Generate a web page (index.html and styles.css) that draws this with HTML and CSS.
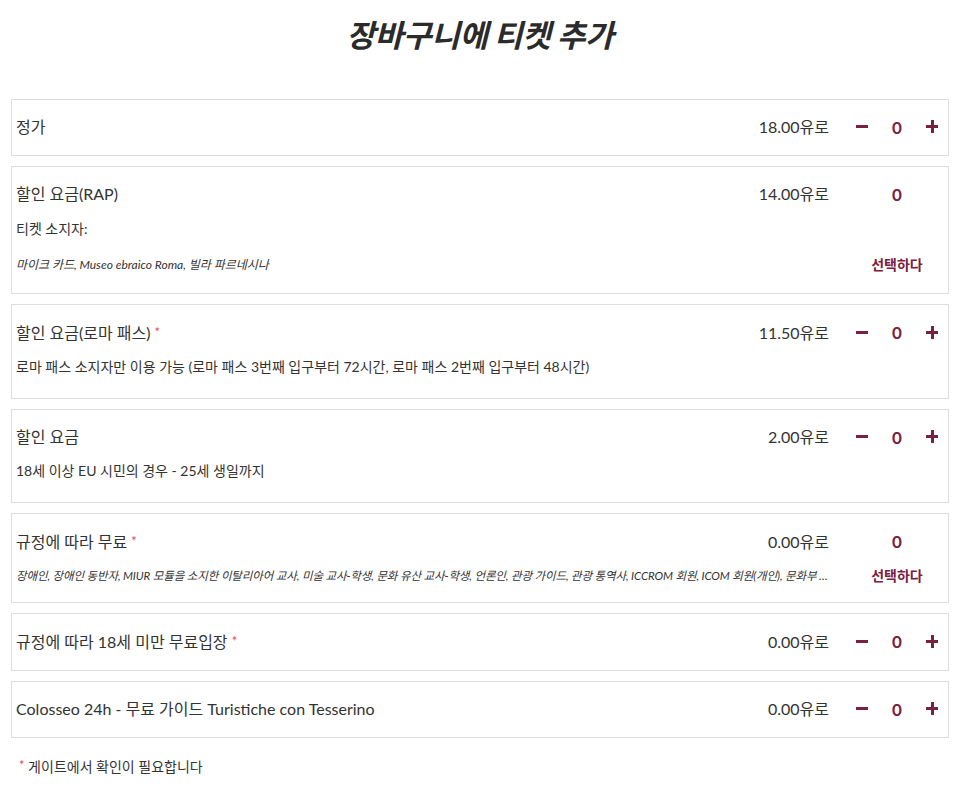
FILE: index.html
```html
<!DOCTYPE html>
<html lang="ko">
<head>
<meta charset="utf-8">
<title>장바구니에 티켓 추가</title>
<link rel="stylesheet" href="styles.css">
</head>
<body>
<div class="page">
  <h1 class="page-title">장바구니에 티켓 추가</h1>
  <div class="tickets">
    <div class="ticket">
      <div class="t-name">정가</div>
      <div class="t-price">18.00유로</div>
      <div class="counter"><span class="btn minus"></span><span class="qty">0</span><span class="btn plus"></span></div>
    </div>

    <div class="ticket">
      <div class="t-name">할인 요금(RAP)</div>
      <div class="t-price">14.00유로</div>
      <div class="counter single"><span class="qty">0</span></div>
      <div class="t-sub">티켓 소지자:</div>
      <div class="t-list">마이크 카드, Museo ebraico Roma, 빌라 파르네시나</div>
      <div class="select">선택하다</div>
    </div>

    <div class="ticket">
      <div class="t-name">할인 요금(로마 패스) <span class="req">*</span></div>
      <div class="t-price">11.50유로</div>
      <div class="counter"><span class="btn minus"></span><span class="qty">0</span><span class="btn plus"></span></div>
      <div class="t-sub last">로마 패스 소지자만 이용 가능 (로마 패스 3번째 입구부터 72시간, 로마 패스 2번째 입구부터 48시간)</div>
    </div>

    <div class="ticket">
      <div class="t-name">할인 요금</div>
      <div class="t-price">2.00유로</div>
      <div class="counter"><span class="btn minus"></span><span class="qty">0</span><span class="btn plus"></span></div>
      <div class="t-sub last">18세 이상 EU 시민의 경우 - 25세 생일까지</div>
    </div>

    <div class="ticket">
      <div class="t-name">규정에 따라 무료 <span class="req">*</span></div>
      <div class="t-price">0.00유로</div>
      <div class="counter single"><span class="qty">0</span></div>
      <div class="t-list clip">장애인, 장애인 동반자, MIUR 모듈을 소지한 이탈리아어 교사, 미술 교사-학생, 문화 유산 교사-학생, 언론인, 관광 가이드, 관광 통역사, ICCROM 회원, ICOM 회원(개인), 문화부 직원, 유럽 연합 회원국의 박물관 직원</div>
      <div class="select">선택하다</div>
    </div>

    <div class="ticket">
      <div class="t-name">규정에 따라 18세 미만 무료입장 <span class="req">*</span></div>
      <div class="t-price">0.00유로</div>
      <div class="counter"><span class="btn minus"></span><span class="qty">0</span><span class="btn plus"></span></div>
    </div>

    <div class="ticket">
      <div class="t-name">Colosseo 24h - 무료 가이드 Turistiche con Tesserino</div>
      <div class="t-price">0.00유로</div>
      <div class="counter"><span class="btn minus"></span><span class="qty">0</span><span class="btn plus"></span></div>
    </div>
  </div>
  <p class="note"><span class="req">*</span> 게이트에서 확인이 필요합니다</p>
</div>
</body>
</html>
```

FILE: styles.css
```css
* { box-sizing: border-box; }
html, body { margin: 0; padding: 0; background: #fff; }
body {
  font-family: Lato, "Noto Sans CJK KR", sans-serif;
  color: #333;
}
.page {
  padding: 0 17px 0 11px;
}
.page-title {
  margin: 15px 0 44px;
  text-align: center;
  font-size: 31px;
  line-height: 40px;
  font-weight: 700;
  font-style: italic;
  color: #2b2b2b;
  letter-spacing: -0.3px;
}
.tickets {
  display: flex;
  flex-direction: column;
  gap: 10px;
}
.ticket {
  border: 1px solid #dedede;
  padding: 15px 3px 16px 4px;
  display: grid;
  grid-template-columns: 1fr auto 96px;
  column-gap: 20px;
  align-items: center;
}
.t-name {
  font-size: 16px;
  line-height: 24px;
}
.t-price {
  font-size: 16px;
  line-height: 24px;
  text-align: right;
}
.counter {
  display: flex;
  justify-content: space-between;
  align-items: center;
  height: 24px;
}
.counter.single { justify-content: center; }
.qty {
  width: 26px;
  text-align: center;
  font-size: 17px;
  font-weight: 700;
  color: #7a2141;
}
.btn {
  width: 26px;
  height: 24px;
  position: relative;
}
.btn::before, .plus::after {
  content: "";
  position: absolute;
  left: 7px;
  top: 10px;
  width: 12px;
  height: 3px;
  background: #7a2141;
}
.plus::after {
  left: 12px;
  top: 5px;
  width: 3px;
  height: 13px;
}
.t-sub {
  grid-column: 1 / -1;
  font-size: 14px;
  line-height: 20px;
  margin-top: 13px;
}
.t-sub.last { margin-top: 12px; margin-bottom: 5px; }
.t-list {
  grid-column: 1 / 3;
  font-size: 12px;
  line-height: 20px;
  font-style: italic;
  margin-top: 16px;
  margin-bottom: 2px;
  white-space: nowrap;
  overflow: hidden;
  text-overflow: ellipsis;
}
.t-list.clip {
  font-size: 11.5px;
  letter-spacing: -0.1px;
  margin-top: 12px;
  margin-bottom: 0;
}
.select {
  grid-column: 3;
  text-align: center;
  font-size: 14px;
  line-height: 20px;
  font-weight: 700;
  color: #7a2141;
  margin-top: 16px;
  margin-bottom: 2px;
}
.t-list.clip + .select { margin-top: 12px; margin-bottom: 0; }
.req { color: #e0485e; font-size: 13px; vertical-align: 2px; }
.note {
  margin: 17px 0 0 8px;
  font-size: 14px;
  line-height: 20px;
}
```
